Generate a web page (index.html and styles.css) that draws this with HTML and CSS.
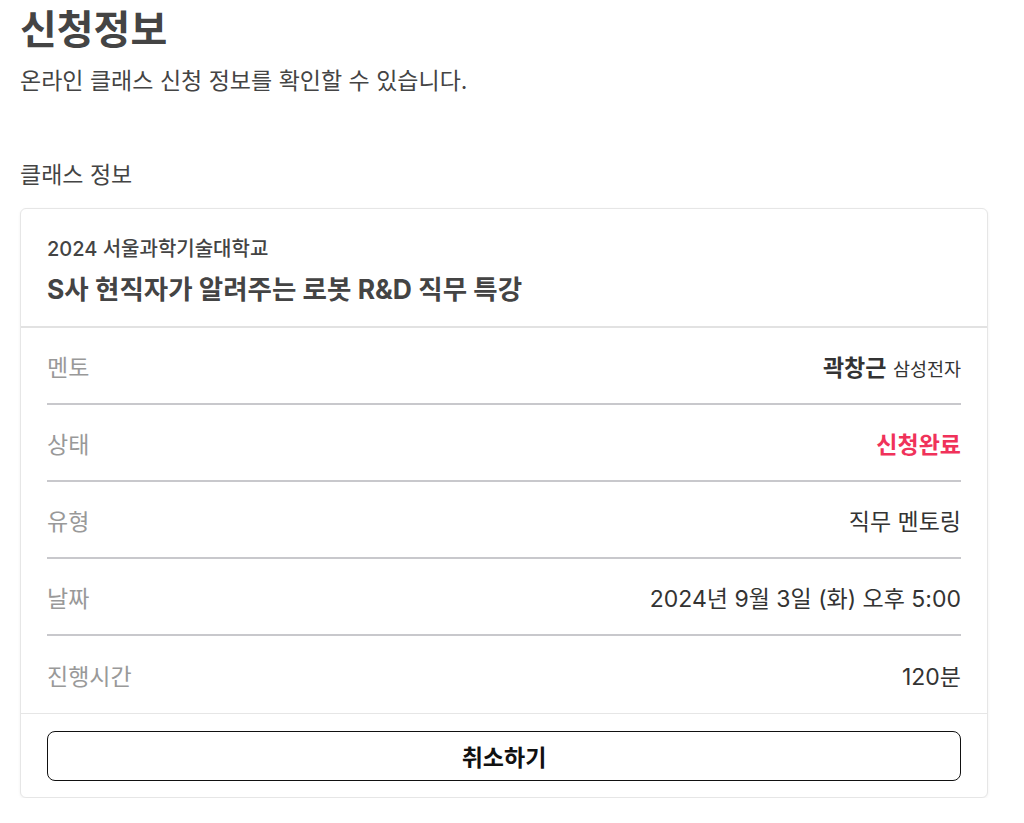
FILE: index.html
```html
<!DOCTYPE html>
<html lang="ko">
<head>
<meta charset="utf-8">
<link rel="stylesheet" href="styles.css">
</head>
<body>
<main class="page">
  <h1 class="title">신청정보</h1>
  <p class="subtitle">온라인 클래스 신청 정보를 확인할 수 있습니다.</p>
  <h2 class="section-label">클래스 정보</h2>
  <section class="card">
    <header class="card-head">
      <div class="org">2024 서울과학기술대학교</div>
      <div class="class-title">S사 현직자가 알려주는 로봇 R&amp;D 직무 특강</div>
    </header>
    <div class="rows">
      <div class="row"><span class="label">멘토</span><span class="value"><b class="mentor">곽창근</b> <small class="company">삼성전자</small></span></div>
      <div class="row"><span class="label">상태</span><span class="value status">신청완료</span></div>
      <div class="row"><span class="label">유형</span><span class="value">직무 멘토링</span></div>
      <div class="row"><span class="label">날짜</span><span class="value">2024년 9월 3일 (화) 오후 5:00</span></div>
      <div class="row"><span class="label">진행시간</span><span class="value">120분</span></div>
    </div>
    <footer class="card-foot">
      <button class="cancel" type="button">취소하기</button>
    </footer>
  </section>
</main>
</body>
</html>
```

FILE: styles.css
```css
* { box-sizing: border-box; }
html, body { margin: 0; padding: 0; background: #fff; }
body {
  font-family: "Inter", "Noto Sans CJK KR", sans-serif;
  color: #333;
}
.page {
  width: 968px;
  margin-left: 20px;
  padding-top: 4px;
}
.title {
  margin: 0;
  font-size: 40px;
  line-height: 52px;
  font-weight: 700;
  color: #444;
}
.subtitle {
  margin: 9px 0 0;
  font-size: 23px;
  line-height: 32px;
  color: #444;
}
.section-label {
  margin: 62px 0 0;
  font-size: 23px;
  line-height: 32px;
  font-weight: 400;
  color: #444;
}
.card {
  margin-top: 17px;
  border: 1px solid #e6e6e6;
  border-radius: 6px;
  box-shadow: 0 1px 3px rgba(0,0,0,0.06);
  background: #fff;
}
.card-head {
  padding: 25px 26px 19px;
  border-bottom: 2px solid #e2e2e2;
}
.org {
  font-size: 20px;
  line-height: 30px;
  font-weight: 500;
  color: #444;
}
.class-title {
  margin-top: 7px;
  font-size: 26.5px;
  line-height: 36px;
  font-weight: 700;
  color: #444;
}
.rows {
  padding: 0 26px;
  border-bottom: 1px solid #e6e6e6;
}
.row {
  display: flex;
  justify-content: space-between;
  align-items: center;
  height: 77px;
  border-bottom: 2px solid #c8c8cc;
  font-size: 23px;
}
.row:last-child { border-bottom: none; }
.label { color: #999; }
.value { color: #333; }
.mentor { font-weight: 700; }
.company { font-size: 18.5px; }
.status { color: #f0325a; font-weight: 700; }
.card-foot {
  padding: 17px 26px 16px;
}
.cancel {
  display: block;
  width: 100%;
  height: 50px;
  border: 1px solid #111;
  border-radius: 8px;
  background: #fff;
  font-family: inherit;
  font-size: 23px;
  font-weight: 700;
  color: #111;
}
```
